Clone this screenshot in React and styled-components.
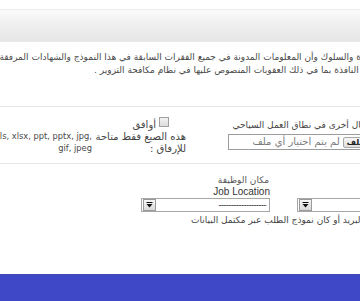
import React from "react";
import styled, { createGlobalStyle } from "styled-components";

const GlobalStyle = createGlobalStyle`
  html, body { margin: 0; padding: 0; background: #ffffff; }
  body { overflow: hidden; }
`;

const Page = styled.div`
  width: 360px;
  height: 301px;
  overflow: hidden;
  display: flex;
  flex-direction: column;
  background: #fff;
  font-family: "DejaVu Sans", "Liberation Sans", sans-serif;
  color: #4a4a4a;
`;

const HeaderBar = styled.div`
  margin-top: 9px;
  height: 31px;
  border-top: 1px solid #ececec;
  border-bottom: 1px solid #e9e9e9;
  background: linear-gradient(#fbfbfb 0%, #f3f3f3 30%, #e6e6e6 100%);
  flex: none;
`;

const Notice = styled.div`
  margin-top: 9px;
  direction: rtl;
  font-size: 9px;
  line-height: 13px;
  flex: none;
`;

const Line = styled.div`
  white-space: nowrap;
  margin-right: ${(p) => -p.$cut}px;
`;

const Separator = styled.div`
  height: 1px;
  background: #e6e6e6;
  margin-top: ${(p) => p.$top}px;
  flex: none;
`;

const FormRow = styled.div`
  direction: rtl;
  display: grid;
  grid-template-columns: 202px 94px 1fr;
  height: 56px;
  margin-right: -28px;
  font-size: 10px;
  line-height: 12px;
  flex: none;
`;

const Cell = styled.div`
  padding-top: ${(p) => p.$top}px;
  padding-left: ${(p) => p.$endGap || 0}px;
  min-width: 0;
`;

const FieldLabel = styled.div`
  white-space: nowrap;
  color: #444;
  font-size: 9px;
  margin-right: 14px;
`;

const FileBox = styled.div`
  margin-top: 3px;
  margin-right: -10px;
  height: 14px;
  border: 1px solid #9c9c9c;
  background: #fff;
  display: flex;
  align-items: center;
  gap: 3px;
  padding-right: 3px;
  font-size: 10px;
  color: #7a7a7a;
  white-space: nowrap;
`;

const FileButton = styled.span`
  display: inline-block;
  height: 9px;
  line-height: 9px;
  padding: 0 3px;
  border: 1px solid #a8a8a8;
  border-radius: 2px;
  background: linear-gradient(#f7f7f7, #dedede);
  color: #222;
  font-size: 8px;
  font-weight: bold;
`;

const AgreeRow = styled.div`
  display: flex;
  align-items: center;
  gap: 3px;
  margin-right: 17px;
  height: 12px;
  white-space: nowrap;
`;

const Box = styled.span`
  width: 8px;
  height: 8px;
  border: 1px solid #a0a0a0;
  background: linear-gradient(#f2f2f2, #dcdcdc);
  flex: none;
  position: relative;
  top: -3px;
`;

const SmallText = styled.div`
  white-space: nowrap;
  color: #444;
`;

const FormatsLine = styled.div`
  white-space: nowrap;
  color: #4a4a4a;
  font-size: 8.3px;
`;

const LocationRow = styled.div`
  direction: rtl;
  display: flex;
  align-items: flex-end;
  gap: 27px;
  margin-right: -28px;
  margin-top: 11px;
  flex: none;
`;

const Field = styled.div`
  width: ${(p) => p.$w}px;
  display: flex;
  flex-direction: column;
  align-items: flex-start;
`;

const LocLabel = styled.div`
  font-size: 9px;
  line-height: 11px;
  color: #555;
  white-space: nowrap;
  margin-right: 1px;
`;

const LocLabelEn = styled.div`
  font-family: "Liberation Sans", Arial, sans-serif;
  font-size: 10px;
  line-height: 12px;
  color: #333;
  white-space: nowrap;
`;

const SelectBox = styled.div`
  width: 100%;
  box-sizing: border-box;
  height: 14px;
  border: 1px solid #a7a7a7;
  background: #fff;
  display: flex;
  align-items: center;
  justify-content: space-between;
  padding: 0 3px 0 1px;
  font-family: "Liberation Sans", Arial, sans-serif;
  font-size: 9px;
  color: #222;
`;

const ArrowBtn = styled.span`
  order: 2;
  width: 11px;
  height: 10px;
  border: 1px solid #9a9a9a;
  background: linear-gradient(#f7f7f7, #d9d9d9);
  display: flex;
  align-items: center;
  justify-content: center;
  flex: none;
`;

const SelectValue = styled.span`
  order: 1;
  line-height: 10px;
  letter-spacing: -0.5px;
`;

const NoteLine = styled.div`
  direction: rtl;
  margin-top: 2px;
  margin-right: ${(p) => -p.$cut}px;
  font-size: 9px;
  line-height: 13px;
  white-space: nowrap;
  color: #444;
  flex: none;
`;

const Spacer = styled.div`
  flex: 1;
`;

const Footer = styled.div`
  height: 26px;
  flex: none;
  background: #3f49c8;
  border-top: 1px solid #4248b4;
`;

const Arrow = () => (
  <svg width="7" height="6" viewBox="0 0 7 6">
    <rect x="0.5" y="0" width="6" height="1" fill="#111" />
    <path d="M0.5 2 L6.5 2 L3.5 5.5 Z" fill="#111" />
  </svg>
);

const Select = ({ value }) => (
  <SelectBox>
    <ArrowBtn>
      <Arrow />
    </ArrowBtn>
    <SelectValue>{value}</SelectValue>
  </SelectBox>
);

export default function App() {
  return (
    <Page>
      <GlobalStyle />
      <HeaderBar />
      <Notice>
        <Line $cut={22}>
          السيرة والسلوك وأن المعلومات المدونة في جميع الفقرات السابقة في هذا النموذج والشهادات المرفقة صحيحة وأتحمل كامل المسؤولية
        </Line>
        <Line $cut={34}>
          العقوبات النافذة بما في ذلك العقوبات المنصوص عليها في نظام مكافحة التزوير .
        </Line>
      </Notice>
      <Separator $top={29} />
      <FormRow>
        <Cell $top={12} $endGap={42}>
          <FieldLabel>أعمال أخرى في نطاق العمل السياحي</FieldLabel>
          <FileBox>
            <FileButton>اختيار ملف</FileButton>
            <span>لم يتم اختيار أي ملف</span>
          </FileBox>
        </Cell>
        <Cell $top={12} $endGap={18}>
          <AgreeRow>
            <Box />
            <span>أوافق</span>
          </AgreeRow>
          <SmallText>هذه الصيغ فقط متاحة</SmallText>
          <SmallText>للإرفاق :</SmallText>
        </Cell>
        <Cell $top={23}>
          <FormatsLine>
            <span dir="ltr">doc, docx, pdf, xls, xlsx, ppt, pptx, jpg,</span>
          </FormatsLine>
          <FormatsLine>
            <span dir="ltr">gif, jpeg</span>
          </FormatsLine>
        </Cell>
      </FormRow>
      <Separator $top={0} />
      <LocationRow>
        <Field $w={91}>
          <Select value="" />
        </Field>
        <Field $w={129}>
          <LocLabel>مكان الوظيفة</LocLabel>
          <LocLabelEn>Job Location</LocLabelEn>
          <Select value="-------------------" />
        </Field>
      </LocationRow>
      <NoteLine $cut={3}>
        البريد أو كان نموذج الطلب عبر مكتمل البيانات
      </NoteLine>
      <Spacer />
      <Footer />
    </Page>
  );
}
